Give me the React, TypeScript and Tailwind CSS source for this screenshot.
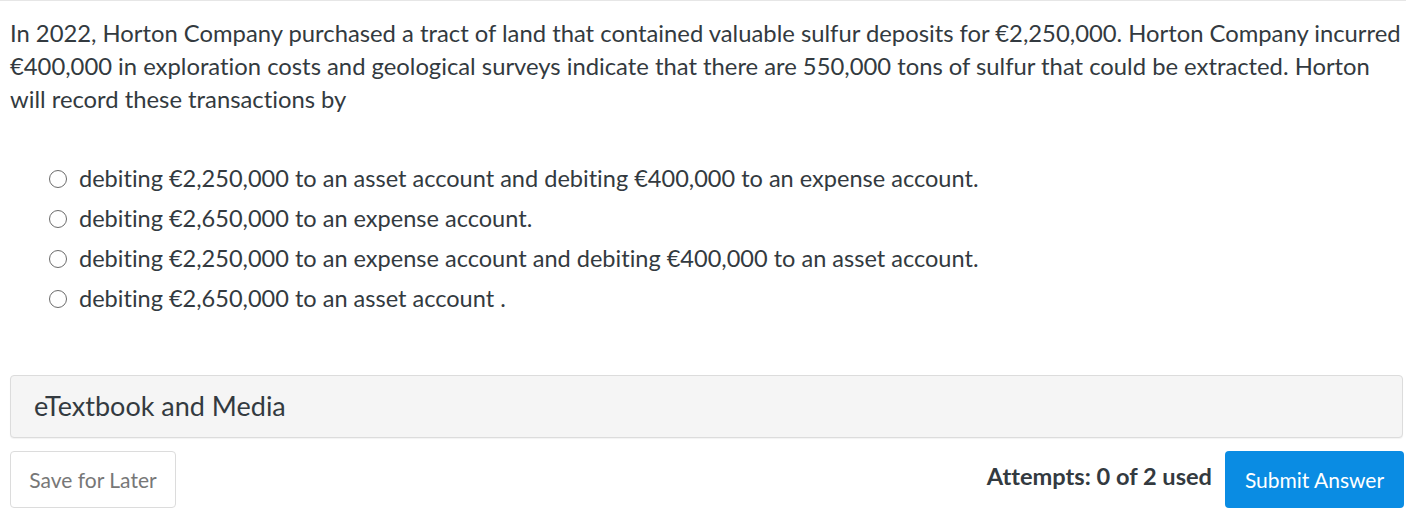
export default function App() {
  const options = [
    'debiting €2,250,000 to an asset account and debiting €400,000 to an expense account.',
    'debiting €2,650,000 to an expense account.',
    'debiting €2,250,000 to an expense account and debiting €400,000 to an asset account.',
    'debiting €2,650,000 to an asset account .',
  ];

  return (
    <div className="w-[1406px] h-[531px] bg-white border-t border-[#e6e6e6] font-['Lato','Noto_Sans',sans-serif] text-[#333a40] overflow-hidden [font-variant-ligatures:none]">
      <div className="pl-[10px] pr-[2px] pt-[16px]">
        <p className="text-[23.8px] leading-[33px]">
          In 2022, Horton Company purchased a tract of land that contained valuable sulfur deposits for €2,250,000. Horton Company incurred €400,000 in exploration costs and geological surveys indicate that there are 550,000 tons of sulfur that could be extracted. Horton will record these transactions by
        </p>

        <div className="mt-[46px] pl-[39px] flex flex-col gap-[7px]">
          {options.map((o, i) => (
            <label key={i} className="flex items-center gap-[12px] text-[23.55px] leading-[33px]">
              <span className="w-[18px] h-[18px] rounded-full border border-[#6b6b6b] bg-white shrink-0" />
              <span>{o}</span>
            </label>
          ))}
        </div>

        <div className="mt-[60px] mr-[1px] h-[63px] rounded-[4px] border border-[#dcdcdc] bg-[#f5f5f5] flex items-center px-[23px] shadow-[0_1px_1px_rgba(0,0,0,0.05)]">
          <span className="text-[27px] text-[#333a40]">eTextbook and Media</span>
        </div>

        <div className="mt-[13px] flex items-center justify-between">
          <button className="h-[57px] w-[166px] rounded-[4px] border border-[#dcdcdc] bg-white text-[21px] text-[#777]">
            Save for Later
          </button>
          <div className="flex items-center gap-[13px]">
            <span className="text-[23.6px] font-bold text-[#333a40] -mt-[5px]">Attempts: 0 of 2 used</span>
            <button className="h-[57px] w-[179px] rounded-[4px] bg-[#0a8ce3] text-[21px] text-white">
              Submit Answer
            </button>
          </div>
        </div>
      </div>
    </div>
  );
}
